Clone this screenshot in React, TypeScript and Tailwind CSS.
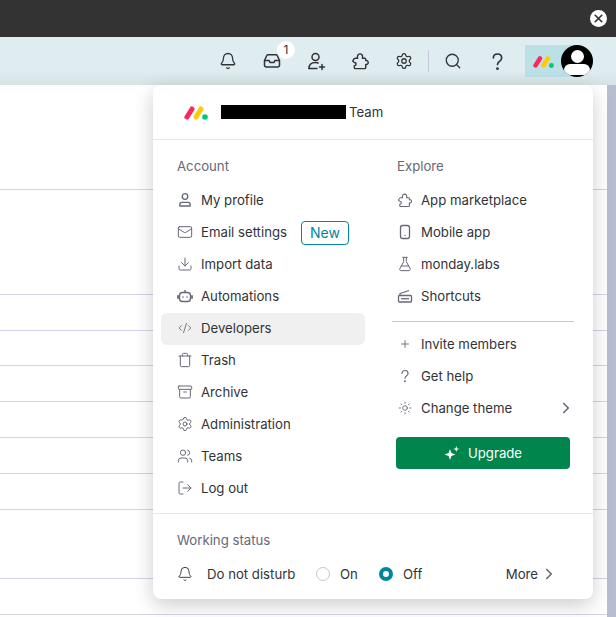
import React from "react";
import { Bell, Mail, Download, CodeXml, Trash, Archive, Settings, Users, LogOut, Search, FlaskConical, Plus, Sun, ChevronRight, X } from "lucide-react";

function Logo({ w }: { w: number }) {
  return (
    <svg width={w} height={(w * 16) / 26} viewBox="0 0 26 16" fill="none">
      <path d="M4 13 L9 5" stroke="#fb275d" strokeWidth="5" strokeLinecap="round" />
      <path d="M13 13 L18 5" stroke="#ffcb00" strokeWidth="5" strokeLinecap="round" />
      <circle cx="22" cy="13" r="2.8" fill="#00ca72" />
    </svg>
  );
}

function InboxIcon() {
  return (
    <svg width="18" height="18" viewBox="0 0 18 18" fill="none" stroke="#323338" strokeWidth="1.5" strokeLinejoin="round">
      <path d="M1.5 8.5 L3.8 3.5 Q4.1 2.8 4.9 2.8 H13.1 Q13.9 2.8 14.2 3.5 L16.5 8.5 V13 Q16.5 15 14.5 15 H3.5 Q1.5 15 1.5 13 Z" />
      <path d="M1.5 8.5 H6 L7.2 10.5 H10.8 L12 8.5 H16.5" />
    </svg>
  );
}

function QuestionIcon({ size, color, sw }: { size: number; color: string; sw: number }) {
  return (
    <svg width={size} height={size} viewBox="0 0 16 16" fill="none" stroke={color} strokeWidth={sw} strokeLinecap="round">
      <path d="M4.5 5 C4.5 0.6 11.5 0.6 11.5 5 C11.5 8 8 7.8 8 10.6" />
      <circle cx="8" cy="14" r="0.5" />
    </svg>
  );
}

function PuzzleIcon({ size, color, sw }: { size: number; color: string; sw: number }) {
  return (
    <svg width={size} height={size} viewBox="0 0 20 20" fill="none" stroke={color} strokeWidth={sw} strokeLinejoin="round">
      <path d="M4.5 6.5 H7 C6 3.5 8 2 9.5 2 C11 2 13 3.5 12 6.5 H14.5 Q15.5 6.5 15.5 7.5 V9 C19 8.3 19 13.7 15.5 13 V16.5 Q15.5 17.5 14.5 17.5 H4.5 Q3.5 17.5 3.5 16.5 V14.5 C6 14.5 6 11 3.5 11 L1.8 9.5 Q3 6.5 4.5 6.5 Z" />
    </svg>
  );
}

function UserPlusIcon() {
  return (
    <svg width="19" height="19" viewBox="0 0 19 19" fill="none" stroke="#323338" strokeWidth="1.5" strokeLinecap="round">
      <circle cx="8.5" cy="5" r="3.5" />
      <path d="M2 16.5 C2 12.5 4.5 10.5 8.5 10.5 C9.5 10.5 10.5 10.7 11.2 11" />
      <path d="M2 16.5 H10" />
      <path d="M15 12.5 V17.5 M12.5 15 H17.5" />
    </svg>
  );
}

function ShortcutsIcon() {
  return (
    <svg width="16" height="16" viewBox="0 0 16 16" fill="none" stroke="#676879" strokeWidth="1.3" strokeLinejoin="round">
      <rect x="1.5" y="7.5" width="13" height="6.5" rx="1" />
      <path d="M4 10.7 H12" />
      <path d="M3 7.5 V5.5 L12 2.5" />
    </svg>
  );
}

function PersonIcon() {
  return (
    <svg width="16" height="16" viewBox="0 0 16 16" fill="none" stroke="#676879" strokeWidth="1.3">
      <circle cx="8" cy="4.5" r="2.8" />
      <path d="M2.8 14 V12.5 Q2.8 10.3 5 10.3 H11 Q13.2 10.3 13.2 12.5 V14 Z" strokeLinejoin="round" />
    </svg>
  );
}

function BotIcon() {
  return (
    <svg width="16" height="16" viewBox="0 0 16 16" fill="none" stroke="#676879" strokeWidth="1.4">
      <rect x="2.5" y="4.5" width="11" height="9" rx="3" />
      <path d="M8 2 V4.5" />
      <path d="M1 8 V10 M15 8 V10" strokeWidth="1.8" strokeLinecap="round" />
      <circle cx="6" cy="9" r="0.8" fill="#676879" stroke="none" />
      <circle cx="10" cy="9" r="0.8" fill="#676879" stroke="none" />
    </svg>
  );
}

function PhoneIcon() {
  return (
    <svg width="16" height="16" viewBox="0 0 16 16" fill="none" stroke="#676879" strokeWidth="1.3">
      <rect x="3.5" y="1.5" width="9" height="13" rx="2.2" />
      <circle cx="8" cy="11.5" r="0.7" fill="#676879" stroke="none" />
    </svg>
  );
}

function SparkIcon() {
  return (
    <svg width="16" height="16" viewBox="0 0 16 16" fill="white">
      <path d="M6 4 L7.4 8.1 L11.5 9.5 L7.4 10.9 L6 15 L4.6 10.9 L0.5 9.5 L4.6 8.1 Z" />
      <path d="M12.3 1 L13 3.2 L15.2 4 L13 4.8 L12.3 7 L11.6 4.8 L9.4 4 L11.6 3.2 Z" />
    </svg>
  );
}

const ic = { size: 16, color: "#676879", strokeWidth: 1.5 };

function Row({ icon, label, active, children }: { icon: React.ReactNode; label: string; active?: boolean; children?: React.ReactNode }) {
  return (
    <div className={`flex h-8 items-center gap-2 rounded-md pb-[2px] pl-4 text-[#323338] ${active ? "bg-[#f0f0f0]" : ""}`}>
      <span className="flex h-4 w-4 shrink-0 items-center justify-center">{icon}</span>
      <span>{label}</span>
      {children}
    </div>
  );
}

function HeaderBtn({ children, badge }: { children: React.ReactNode; badge?: string }) {
  return (
    <div className="relative flex h-8 w-11 items-center justify-center">
      {children}
      {badge && (
        <span className="absolute right-[-1px] top-[-4px] flex h-[18px] w-[18px] items-center justify-center rounded-full bg-white text-[12px] text-[#323338]">
          {badge}
        </span>
      )}
    </div>
  );
}

const rowHeights = [105, 105, 36, 35, 36, 36, 36, 36, 69, 36];

export default function App() {
  const hi = { size: 18, color: "#323338", strokeWidth: 1.7 };
  return (
    <div className="relative flex h-[617px] w-[616px] flex-col overflow-hidden bg-white text-[13.2px] leading-5 text-[#323338] [font-family:Inter,'Liberation_Sans',sans-serif]">
      <div className="flex h-[37px] shrink-0 items-center justify-end bg-[#333333] pr-[9px]">
        <span className="flex h-[17px] w-[17px] items-center justify-center rounded-full bg-white">
          <X size={13} color="#333333" strokeWidth={3} />
        </span>
      </div>

      <div className="flex h-[48px] shrink-0 items-center justify-end bg-gradient-to-b from-[#dfedf1] from-70% to-[#d5e3e7] pr-[23px]">
        <HeaderBtn><Bell {...hi} /></HeaderBtn>
        <HeaderBtn badge="1"><InboxIcon /></HeaderBtn>
        <HeaderBtn><UserPlusIcon /></HeaderBtn>
        <HeaderBtn><PuzzleIcon size={19} color="#323338" sw={1.5} /></HeaderBtn>
        <HeaderBtn><Settings {...hi} /></HeaderBtn>
        <div className="mx-[2px] h-[22px] w-px bg-[#c5c7d8]" />
        <HeaderBtn><Search {...hi} /></HeaderBtn>
        <HeaderBtn><QuestionIcon size={19} color="#323338" sw={1.4} /></HeaderBtn>
        <div className="ml-[6px] flex h-8 w-[68px] items-center rounded-l-[4px] rounded-r-full bg-[#bbe0e5]">
          <span className="ml-[7px] flex"><Logo w={23} /></span>
          <span className="relative ml-auto flex h-8 w-8 items-end justify-center overflow-hidden rounded-full bg-black">
            <span className="absolute top-[5px] h-[13px] w-[13px] rounded-full bg-white" />
            <span className="absolute bottom-[2px] h-[11px] w-[26px] rounded-t-[13px] rounded-b-[11px] bg-white" />
          </span>
        </div>
      </div>

      <div className="flex min-h-0 flex-1">
        <div className="flex-1">
          {rowHeights.map((h, i) => (
            <div key={i} style={{ height: h }} className="border-b border-[#d0d4e4]" />
          ))}
        </div>
        <div className="w-[9px] bg-[#b9bdd0]" />
      </div>

      <div className="absolute left-[153px] top-[85px] w-[440px] rounded-lg bg-white shadow-[0_6px_20px_rgba(0,0,0,0.2)]">
        <div className="flex h-[55px] items-center border-b border-[#e7e8ee] pl-[30px]">
          <Logo w={26} />
          <span className="ml-[12px] h-[14px] w-[125px] bg-black" />
          <span className="ml-[3px]">Team</span>
        </div>

        <div className="flex px-2">
          <div className="w-[204px] pb-[8px] pt-[16px]">
            <div className="mb-[9px] h-5 pl-4 text-[#676879]">Account</div>
            <Row icon={<PersonIcon />} label="My profile" />
            <Row icon={<Mail {...ic} />} label="Email settings">
              <span className="ml-[6px] mt-[2px] flex h-6 w-12 items-center justify-center rounded border border-[#00869e] text-[14px] text-[#00869e]">New</span>
            </Row>
            <Row icon={<Download {...ic} />} label="Import data" />
            <Row icon={<BotIcon />} label="Automations" />
            <Row icon={<CodeXml size={14} color="#676879" strokeWidth={1.5} />} label="Developers" active />
            <Row icon={<Trash {...ic} />} label="Trash" />
            <Row icon={<Archive {...ic} />} label="Archive" />
            <Row icon={<Settings {...ic} />} label="Administration" />
            <Row icon={<Users {...ic} />} label="Teams" />
            <Row icon={<LogOut {...ic} />} label="Log out" />
          </div>
          <div className="ml-4 w-[204px] pt-[16px]">
            <div className="mb-[9px] h-5 pl-4 text-[#676879]">Explore</div>
            <Row icon={<PuzzleIcon size={17} color="#676879" sw={1.4} />} label="App marketplace" />
            <Row icon={<PhoneIcon />} label="Mobile app" />
            <Row icon={<FlaskConical {...ic} />} label="monday.labs" />
            <Row icon={<ShortcutsIcon />} label="Shortcuts" />
            <div className="mx-[11px] mb-[7px] mt-2 h-px bg-[#c3c6d4]" />
            <Row icon={<Plus size={12} color="#676879" strokeWidth={1.8} />} label="Invite members" />
            <Row icon={<QuestionIcon size={14} color="#676879" sw={1.3} />} label="Get help" />
            <div className="relative">
              <Row icon={<Sun size={14} color="#676879" strokeWidth={1.5} />} label="Change theme" />
              <ChevronRight size={18} color="#676879" strokeWidth={2.2} className="absolute right-[10px] top-[6px]" />
            </div>
            <div className="ml-[15px] mt-[12px] flex h-8 w-[174px] items-center justify-center gap-2 rounded bg-[#00854d] text-white">
              <SparkIcon />
              <span>Upgrade</span>
            </div>
          </div>
        </div>

        <div className="border-t border-[#e7e8ee] px-6 pb-[9px] pt-4">
          <div className="mb-2 h-5 text-[#676879]">Working status</div>
          <div className="flex h-8 items-center">
            <span className="w-[30px]"><Bell size={16} color="#323338" strokeWidth={1.4} /></span>
            <span className="w-[109px]">Do not disturb</span>
            <span className="flex w-[63px] items-center gap-[10px]">
              <span className="h-[14px] w-[14px] rounded-full border border-[#c3c6d4]" />
              <span>On</span>
            </span>
            <span className="flex items-center gap-[10px]">
              <span className="h-[14px] w-[14px] rounded-full border-[4px] border-[#00869e]" />
              <span>Off</span>
            </span>
            <span className="ml-auto mr-[11px] flex items-center gap-[2px]">
              <span>More</span>
              <ChevronRight size={18} color="#676879" strokeWidth={2.2} />
            </span>
          </div>
        </div>
      </div>
    </div>
  );
}
